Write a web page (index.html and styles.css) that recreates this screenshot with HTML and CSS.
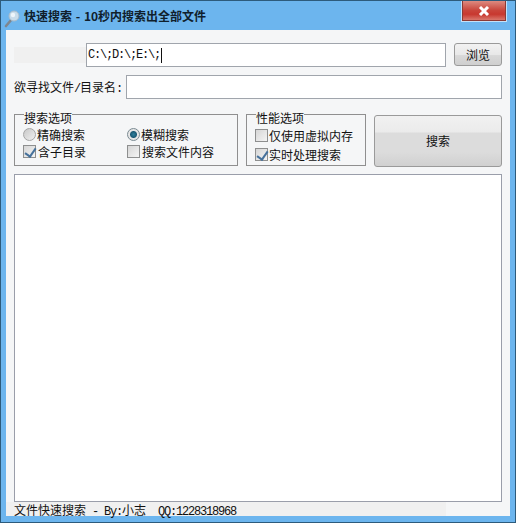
FILE: index.html
```html
<!DOCTYPE html>
<html lang="zh-CN">
<head>
  <meta charset="UTF-8">
  <title>快速搜索 - 10秒内搜索出全部文件</title>
  <meta name="viewport" content="width=device-width, initial-scale=1.0">
  <link rel="stylesheet" href="styles.css">
</head>
<body>

  <div class="window">
    <div class="titlebar">
      <svg class="app-icon" width="18" height="20" viewBox="0 0 18 20">
        <path d="M2 18 L8 11" stroke="#7f868e" stroke-width="2.6" stroke-linecap="round"/>
        <circle cx="10" cy="8" r="5" fill="#c9dcea" stroke="#a9bccb"/>
        <circle cx="9" cy="7" r="2.2" fill="#eef5fa"/>
      </svg>
      <span class="title-text">快速搜索 - 10秒内搜索出全部文件</span>
      <div class="close-btn">
        <svg width="12" height="10" viewBox="0 0 12 10">
          <path d="M2 1 L10 9 M10 1 L2 9" stroke="#ffffff" stroke-width="3"/>
        </svg>
      </div>
    </div>

    <div class="content">
      <div class="row path-row">
        <div class="blank-label"></div>
        <div class="field path-field">C:\;D:\;E:\;<span class="caret"></span></div>
        <div class="browse-btn">浏览</div>
      </div>

      <div class="row name-row">
        <span class="name-label">欲寻找文件<span class="latin">/</span>目录名<span class="latin">:</span></span>
        <div class="field name-field"></div>
      </div>

      <div class="row options-row">
        <div class="group search-group">
          <div class="group-title">搜索选项</div>
          <div class="search-grid">
            <div class="opt"><span class="radio"></span>精确搜索</div>
            <div class="opt"><span class="radio on"></span>模糊搜索</div>
            <div class="opt"><span class="check on"></span>含子目录</div>
            <div class="opt"><span class="check"></span>搜索文件内容</div>
          </div>
        </div>
        <div class="group perf-group">
          <div class="group-title">性能选项</div>
          <div class="opt"><span class="check"></span>仅使用虚拟内存</div>
          <div class="opt"><span class="check on"></span>实时处理搜索</div>
        </div>
        <div class="search-btn">搜索</div>
      </div>

      <div class="results"></div>

      <div class="statusbar">文件快速搜索<span class="latin"> - By:</span>小志<span class="latin">  QQ:1228318968</span></div>
    </div>
  </div>

</body>
</html>
```

FILE: styles.css
```css
* {
  box-sizing: border-box;
}
body {
  margin: 0;
  font-family: "Noto Sans CJK SC", "Liberation Sans", sans-serif;
  font-size: 12px;
  color: #111;
}
.window {
  width: 516px;
  height: 523px;
  display: flex;
  flex-direction: column;
  background: #6cb5ee;
  border: 1px solid #2d5b7c;
  padding: 0 5px 6px 5px;
  overflow: hidden;
}
.titlebar {
  height: 29px;
  flex: none;
  display: flex;
  align-items: flex-start;
}
.app-icon {
  margin: 7px 0 0 -2px;
  flex: none;
}
.title-text {
  margin: 7px 0 0 2px;
  font-weight: bold;
  line-height: 16px;
  word-spacing: 1px;
  color: #10202c;
}
.close-btn {
  margin-left: auto;
  margin-right: 4px;
  width: 44px;
  height: 20px;
  display: flex;
  align-items: center;
  justify-content: center;
  background: linear-gradient(#dd8b80, #c9443a 50%, #c8382f 70%, #d9776c);
  border: 1px solid #8c3a34;
  border-top: 0;
  box-shadow: 0 0 0 1px rgba(255,255,255,0.6);
}
.content {
  flex: 1;
  display: flex;
  flex-direction: column;
  background: #f5f6f7;
  padding: 13px 8px 0 8px;
}
.row {
  display: flex;
  flex: none;
}
.field {
  height: 24px;
  background: #fff;
  border: 1px solid #a0a5ac;
}
.path-row {
  height: 24px;
}
.blank-label {
  width: 72px;
  height: 16px;
  margin-top: 4px;
  background: #f0f0f0;
}
.path-field {
  width: 360px;
  font-family: "Liberation Mono", "Noto Sans CJK SC", monospace;
  font-size: 12px;
  letter-spacing: -1.2px;
  line-height: 22px;
  padding-left: 1px;
  display: flex;
  align-items: center;
}
.caret {
  width: 1px;
  height: 15px;
  margin-left: 1px;
  background: #111;
}
.browse-btn {
  width: 48px;
  height: 23px;
  margin-left: 8px;
  display: flex;
  align-items: center;
  justify-content: center;
  background: linear-gradient(#f2f2f2, #e8e8e8 50%, #d8d8d8 55%, #cfcfcf);
  border: 1px solid #9a9a9a;
  border-radius: 3px;
}
.name-row {
  margin-top: 8px;
  height: 24px;
  align-items: center;
}
.name-label {
  width: 112px;
  white-space: nowrap;
}
.name-field {
  width: 376px;
}
.options-row {
  margin-top: 15px;
  height: 52px;
}
.group {
  height: 52px;
  border: 1px solid #8f8f8f;
}
.group-title {
  width: fit-content;
  margin: -4px 0 0 1px;
  height: 15px;
  line-height: 14px;
  background: #f5f6f7;
}
.search-group {
  width: 224px;
  padding-left: 8px;
}
.search-group .check {
  margin-right: 2px;
}
.search-grid {
  display: grid;
  grid-template-columns: 104px 1fr;
}
.perf-group {
  width: 120px;
  margin-left: 8px;
  padding-left: 8px;
}
.perf-group .opt {
  height: 18px;
  margin-bottom: 1px;
}
.opt {
  height: 17px;
  display: flex;
  align-items: center;
  white-space: nowrap;
}
.radio {
  width: 13px;
  height: 13px;
  margin-right: 1px;
  border-radius: 50%;
  border: 1px solid #a5a5a5;
  background: linear-gradient(135deg, #c8c8c8, #f0f0f0);
}
.radio.on {
  background: radial-gradient(circle, #2f7f9c 0, #1c5a75 3px, #e6e6e6 4px);
  border-color: #7a8a92;
}
.check {
  position: relative;
  width: 13px;
  height: 13px;
  margin-right: 1px;
  border: 1px solid #8e8f8f;
  background: linear-gradient(135deg, #d6d6d6, #f4f4f4);
}
.check.on::after {
  content: "";
  position: absolute;
  left: 3px;
  top: 0;
  width: 5px;
  height: 9px;
  border: solid #46719b;
  border-width: 0 2px 2px 0;
  transform: rotate(35deg);
}
.search-btn {
  width: 128px;
  height: 52px;
  margin: 1px 0 0 8px;
  padding-bottom: 2px;
  display: flex;
  align-items: center;
  justify-content: center;
  background: linear-gradient(#f1f1f1, #ebebeb 32%, #dcdcdc 34%, #dcdcdc 72%, #d0d0d0);
  border: 1px solid #9a9a9a;
  border-radius: 3px;
}
.results {
  flex: 1;
  width: 488px;
  margin-top: 8px;
  background: #fff;
  border: 1px solid #9a9eaa;
}
.statusbar {
  flex: none;
  height: 14px;
  margin: 0 -8px;
  padding-left: 8px;
  width: 440px;
  line-height: 16px;
  background: #f0f0f0;
  white-space: pre;
}
.latin {
  font-family: "Liberation Mono", monospace;
  font-size: 12px;
  letter-spacing: -1.2px;
}
```
